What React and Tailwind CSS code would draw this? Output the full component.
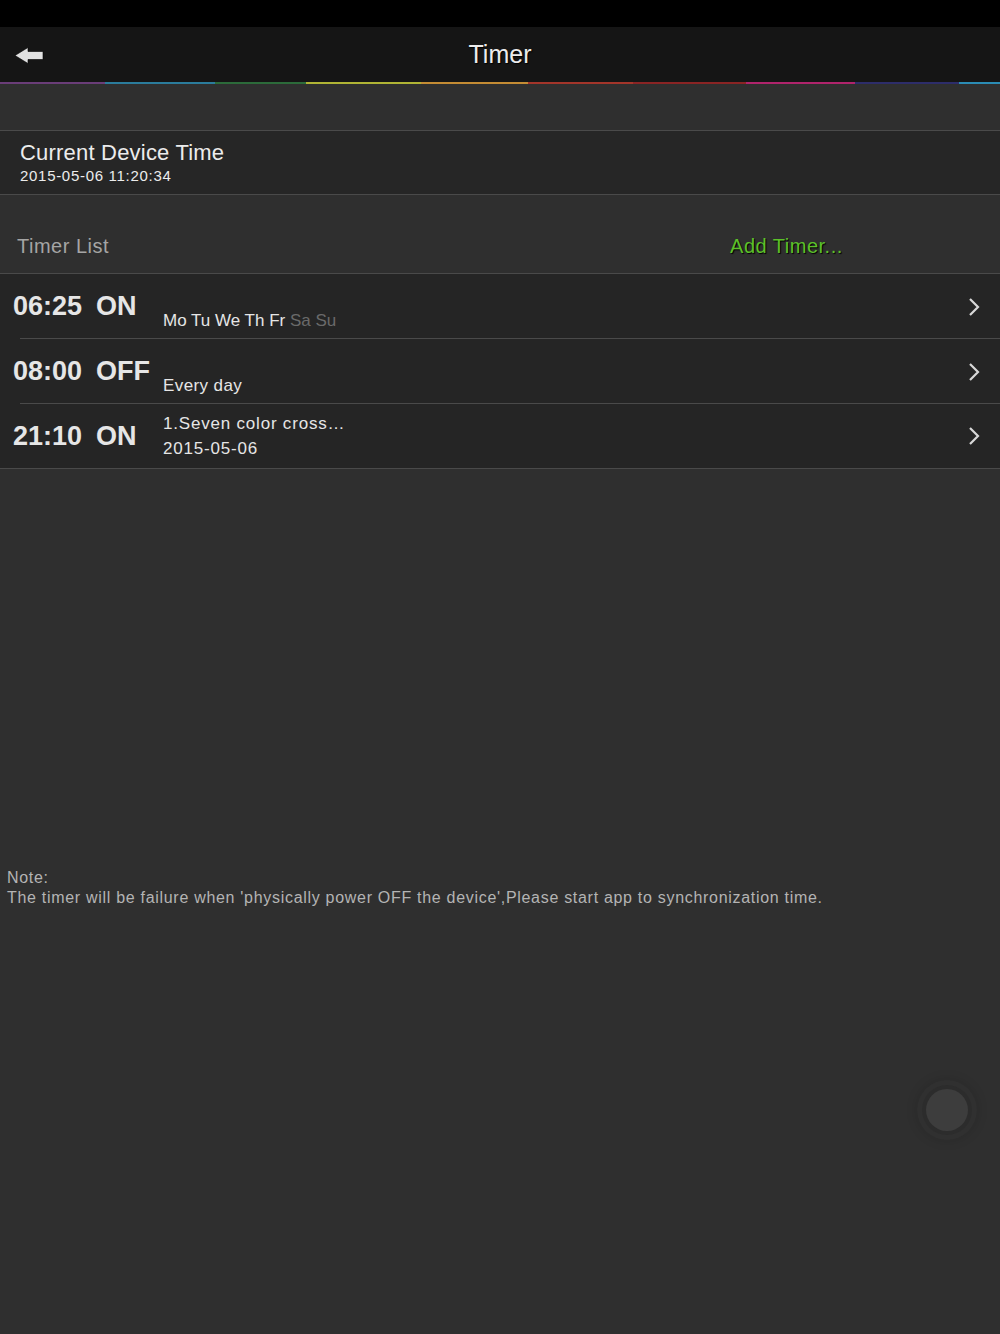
import React from 'react';

const segments = [
  ['w-[105px]', 'bg-[#6a3d78]'],
  ['w-[110px]', 'bg-[#2b7c9c]'],
  ['w-[91px]', 'bg-[#2c6b3a]'],
  ['w-[115px]', 'bg-[#b0b435]'],
  ['w-[107px]', 'bg-[#c48c34]'],
  ['w-[105px]', 'bg-[#a3352a]'],
  ['w-[113px]', 'bg-[#8a2424]'],
  ['w-[109px]', 'bg-[#b0246c]'],
  ['w-[104px]', 'bg-[#2d2d6a]'],
  ['flex-1', 'bg-[#2b8cb4]'],
];

const timers = [
  { time: '06:25', state: 'ON', days: true },
  { time: '08:00', state: 'OFF', line2: 'Every day' },
  { time: '21:10', state: 'ON', line1: '1.Seven color cross…', line2: '2015-05-06' },
];

const Chevron = () => (
  <svg width="12" height="20" viewBox="0 0 12 20" className="text-[#d8d8d8]">
    <path d="M2 2 L10 10 L2 18" fill="none" stroke="currentColor" strokeWidth="2.2" />
  </svg>
);

const TimerRow = ({ t, last }) => (
  <div className={`relative flex h-[65px] items-center bg-[#252525] ${last ? 'border-b border-[#4a4a4a]' : ''}`}>
    <div className="flex w-[163px] shrink-0 pl-[13px] text-[27px] font-bold text-[#e6e6e6]">
      <span className="w-[83px]">{t.time}</span>
      <span>{t.state}</span>
    </div>
    <div className="flex flex-1 flex-col text-[17px] leading-[25px] tracking-[0.4px] text-[#e6e6e6]">
      {t.days ? (
        <div className="pt-[27px] tracking-normal">
          Mo Tu We Th Fr <span className="text-[#6a6a6a]">Sa Su</span>
        </div>
      ) : t.line1 ? (
        <>
          <div className="tracking-[0.8px]">{t.line1}</div>
          <div className="tracking-[0.8px]">{t.line2}</div>
        </>
      ) : (
        <div className="pt-[27px]">{t.line2}</div>
      )}
    </div>
    <div className="pr-[20px]">
      <Chevron />
    </div>
    {!last && <div className="absolute bottom-0 left-[20px] right-0 h-px bg-[#4a4a4a]" />}
  </div>
);

export default function App() {
  return (
    <div className="flex h-[1334px] w-[1000px] flex-col bg-[#2f2f2f] font-['Liberation_Sans',Arial,sans-serif]">
      <div className="h-[27px] bg-black" />
      <div className="relative flex h-[55px] items-center justify-center bg-[#151515]">
        {/* back arrow */}
        <svg width="30" height="17" viewBox="0 0 30 17" className="absolute left-[14px] top-[20px]">
          <path d="M1 8.5 L14 0.5 L14 4.5 L29 4.5 L29 12.5 L14 12.5 L14 16.5 Z" fill="#e2e2e2" stroke="#000" strokeWidth="0.6" />
        </svg>
        <span className="text-[25px] text-[#ececec] [text-shadow:1px_1px_1px_#000]">Timer</span>
      </div>
      <div className="flex h-[2px]">
        {segments.map(([w, c], i) => (
          <div key={i} className={`${w} ${c}`} />
        ))}
      </div>
      <div className="h-[46px]" />
      <div className="flex h-[65px] flex-col border-y border-[#4a4a4a] bg-[#262626] pl-[20px] pt-[9px] text-[#ececec]">
        <span className="text-[22px] leading-[26px] tracking-[0.2px]">Current Device Time</span>
        <span className="text-[15px] leading-[20px] tracking-[0.7px]">2015-05-06 11:20:34</span>
      </div>
      <div className="flex h-[78px] items-center pt-[24px] text-[20px] tracking-[0.5px]">
        <span className="pl-[17px] text-[#a5a5a5]">Timer List</span>
        <span className="ml-[621px] text-[#5cc12a] [text-shadow:1px_1px_1px_#000]">Add Timer...</span>
      </div>
      <div className="border-t border-[#4a4a4a]">
        {timers.map((t, i) => (
          <TimerRow key={i} t={t} last={i === timers.length - 1} />
        ))}
      </div>
      <div className="mt-[399px] pl-[7px] text-[16px] leading-[20px] tracking-[0.7px] text-[#b4b4b4]">
        <div>Note:</div>
        <div>The timer will be failure when 'physically power OFF the device',Please start app to synchronization time.</div>
      </div>
      <div className="flex flex-1 justify-end pr-[23px] pt-[172px]">
        <div className="flex h-[60px] w-[60px] items-center justify-center rounded-full bg-[#303030] shadow-[0_0_12px_rgba(0,0,0,0.15)]">
          <div className="flex h-[50px] w-[50px] items-center justify-center rounded-full bg-[#2c2c2c]">
            <div className="h-[42px] w-[42px] rounded-full bg-[#3d3d3d]" />
          </div>
        </div>
      </div>
    </div>
  );
}
